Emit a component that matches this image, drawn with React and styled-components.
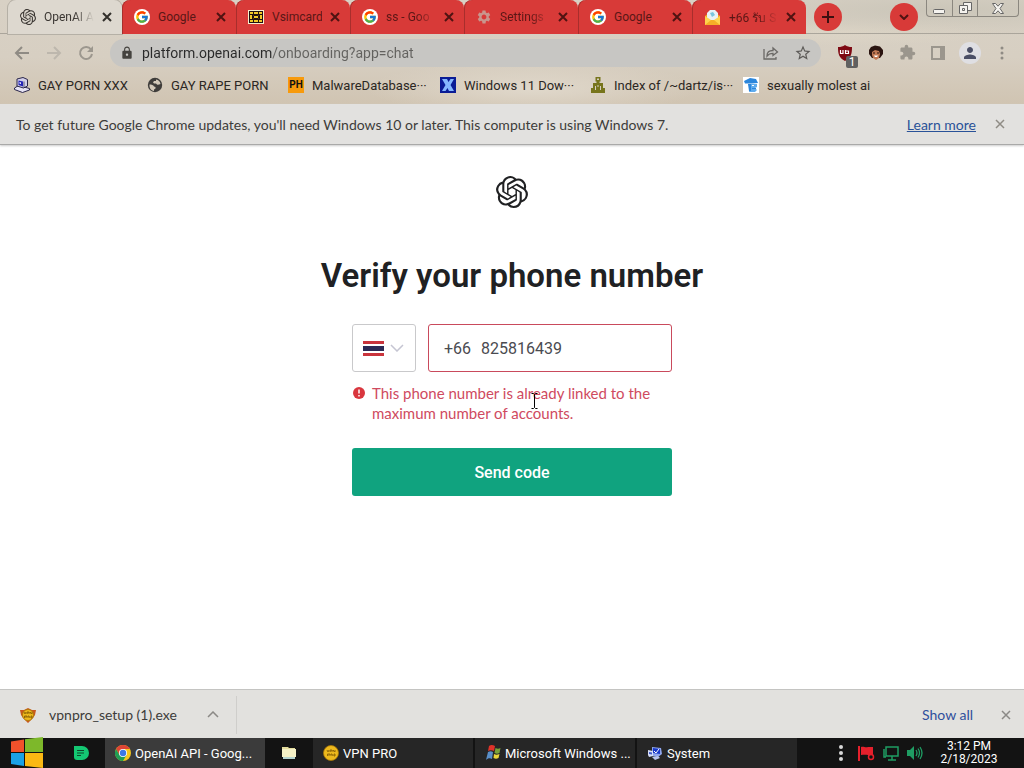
import { useState } from 'react';
import styled, { createGlobalStyle, css } from 'styled-components';
import { SiOpenai } from 'react-icons/si';
import { FcGoogle } from 'react-icons/fc';
import { MdSettings, MdLock, MdExtension, MdPerson, MdPublic, MdStarBorder } from 'react-icons/md';

const GlobalStyle = createGlobalStyle`
  * {
    box-sizing: border-box;
  }
  body {
    margin: 0;
    background: #fff;
    font-family: Roboto, 'Noto Sans', 'Liberation Sans', sans-serif;
    font-size: 13px;
    color: #2b2723;
  }
  button,
  input,
  select {
    font: inherit;
    color: inherit;
  }
  button {
    border: 0;
    padding: 0;
    background: none;
    cursor: pointer;
  }
  svg {
    display: block;
    flex: none;
  }
`;

const Screen = styled.div`
  display: flex;
  flex-direction: column;
  min-height: 100vh;
`;

const BrowserTop = styled.header`
  background:
    radial-gradient(ellipse at 52% 85%, #e0d8cb 0, transparent 22%),
    radial-gradient(ellipse at 92% 10%, #cbc6b9 0, transparent 20%),
    radial-gradient(ellipse at 82% 30%, #ddd5c6 0, transparent 14%),
    linear-gradient(180deg, #d8d1c5 0, #d7cfc2 55%, #d0c4b2 100%);
`;

const TabStrip = styled.div`
  display: flex;
  height: 34px;
  padding: 0 5px 0 8px;
  border-bottom: 1px solid #aaa59b;
`;

const Tab = styled.div`
  display: flex;
  align-items: center;
  gap: 8px;
  flex: 0 1 114px;
  min-width: 0;
  height: 34px;
  padding: 0 10px 0 12px;
  background: #d83a38;
  color: #5a1716;
  font-size: 12px;
  border-radius: 8px 8px 0 0;

  & + & {
    box-shadow: inset 1px 0 0 #a82e2c;
  }
  ${({ $active }) =>
    $active &&
    css`
      background: #ddd8cf;
      color: #3a3632;
      box-shadow: 0 0 0 1px #b5b0a6;
    `}
`;

const TabTitle = styled.span`
  flex: 1;
  min-width: 0;
  overflow: hidden;
  white-space: nowrap;
  ${({ $fade }) =>
    $fade &&
    css`
      mask-image: linear-gradient(90deg, #000 60%, transparent 100%);
    `}
`;

const RoundButton = styled.button`
  display: flex;
  align-items: center;
  justify-content: center;
  width: 28px;
  height: 28px;
  margin: 3px 8px 0;
  border-radius: 50%;
  background: #d83a38;
`;

const Spacer = styled.div`
  flex: 1;
`;

const WindowButtons = styled.div`
  display: flex;
  height: 17px;
  border: 1px solid #8b877f;
  border-top: 0;
  border-radius: 0 0 4px 4px;
`;

const WindowButton = styled.button`
  display: flex;
  align-items: center;
  justify-content: center;
  width: ${({ $wide }) => ($wide ? 41 : 25)}px;

  & + & {
    border-left: 1px solid #8b877f;
  }
`;

const Toolbar = styled.div`
  display: flex;
  align-items: center;
  gap: 16px;
  height: 37px;
  padding: 0 14px;
`;

const Extensions = styled.div`
  display: flex;
  align-items: center;
  gap: 15px;
`;

const IconButton = styled.button`
  display: flex;
  align-items: center;
  justify-content: center;
  position: relative;
  flex: none;
  width: 16px;
  height: 24px;
  color: ${({ $color }) => $color || '#8f8b84'};
`;

const AddressBar = styled.div`
  display: flex;
  align-items: center;
  gap: 16px;
  flex: 1;
  min-width: 0;
  height: 28px;
  padding: 0 10px;
  border-radius: 14px;
  background: #c7c6c3;
  color: #5d5b58;
`;

const AddressInput = styled.input`
  flex: 1;
  min-width: 0;
  height: 24px;
  padding: 0;
  margin-left: -8px;
  border: 0;
  outline: 0;
  font-size: 14px;
  color: transparent;
  background: linear-gradient(90deg, #2a2a2a 130px, #63625f 130px);
  background-clip: text;
`;

const Badge = styled.span`
  position: absolute;
  right: -5px;
  bottom: -3px;
  width: 12px;
  height: 12px;
  border-radius: 2px;
  background: #606060;
  color: #fff;
  font-size: 12px;
  line-height: 12px;
`;

const Avatar = styled.button`
  display: flex;
  align-items: center;
  justify-content: center;
  width: 22px;
  height: 22px;
  margin: 0 -2px;
  border-radius: 50%;
  background: #dfdfe3;
  color: #4b4f66;
`;

const Bookmarks = styled.nav`
  display: flex;
  height: 33px;
  padding-left: 14px;
`;

const Bookmark = styled.a`
  display: flex;
  align-items: center;
  gap: 8px;
  flex: 0 1 ${({ $width }) => $width}px;
  height: 28px;
  color: inherit;
  text-decoration: none;
  white-space: nowrap;
`;

const InfoBar = styled.div`
  display: flex;
  align-items: center;
  gap: 16px;
  height: 41px;
  padding: 0 16px;
  background: #e2e1df;
  color: #3d3c3a;
  font-family: Lato, sans-serif;
  font-size: 14px;
  border-bottom: 1px solid #a9a9a8;
  box-shadow: 0 1px 2px #ccc;

  a {
    color: #2a5298;
  }
`;

const Page = styled.main`
  display: flex;
  flex-direction: column;
  align-items: center;
  flex: 1;
  padding: 31px 16px;
  color: #202123;

  h1 {
    margin: 48px 0 28px;
    font-size: 33px;
    line-height: 40px;
    font-weight: 600;
    text-align: center;
  }
`;

const PhoneForm = styled.form`
  position: relative;
  width: 100%;
  max-width: 320px;
`;

const Fields = styled.div`
  display: flex;
  gap: 12px;
`;

const CountryBox = styled.div`
  position: relative;
  display: flex;
  align-items: center;
  gap: 6px;
  flex: none;
  width: 64px;
  height: 48px;
  padding: 0 10px;
  border: 1px solid #c9c9cb;
  border-radius: 3px;

  select {
    position: absolute;
    inset: 0;
    opacity: 0;
  }
`;

const PhoneBox = styled.label`
  display: flex;
  align-items: center;
  gap: 10px;
  flex: 1;
  min-width: 0;
  height: 48px;
  padding: 0 15px;
  border: 1px solid #c94a5c;
  border-radius: 3px;
  font-size: 16px;
  color: #4a4b50;

  input {
    flex: 1;
    min-width: 0;
    padding: 0;
    border: 0;
    outline: 0;
    background: none;
  }
`;

const ErrorText = styled.div`
  display: flex;
  gap: 7px;
  margin-top: 11px;
  font-family: Lato, sans-serif;
  font-size: 15px;
  line-height: 20px;
  color: #cf4a60;

  svg {
    margin: 4px 0 0 1px;
  }
`;

const SubmitButton = styled.button`
  width: 100%;
  height: 48px;
  margin-top: 25px;
  border-radius: 3px;
  background: #10a37f;
  color: #fff;
  font-size: 16px;
  font-weight: 500;
`;

const TextCursor = styled.svg`
  position: absolute;
  left: 179px;
  top: 69px;
`;

const Shelf = styled.div`
  display: flex;
  align-items: center;
  gap: 28px;
  height: 49px;
  padding: 1px 13px 0 20px;
  border-top: 1px solid #c4c4c2;
  background: #e2e1de;
  color: #3d3c3a;
  font-family: Lato, sans-serif;
  font-size: 14px;

  a {
    color: #2f4f9c;
    text-decoration: none;
  }
`;

const Download = styled.div`
  display: flex;
  align-items: center;
  gap: 13px;
  width: 217px;
  height: 38px;
  padding-right: 17px;
  border-right: 1px solid #cfcecb;
`;

const Taskbar = styled.footer`
  display: flex;
  align-items: center;
  height: 30px;
  background: #131313;
  color: #fff;
`;

const StartButton = styled.button`
  display: flex;
  width: 57px;
  padding-left: 10px;
`;

const Pinned = styled.button`
  display: flex;
  align-items: center;
  justify-content: center;
  width: 48px;
  height: 30px;
`;

const TaskButton = styled.button`
  display: flex;
  align-items: center;
  gap: 4px;
  flex: 0 1 160px;
  min-width: 0;
  height: 30px;
  padding: 0 10px;
  white-space: nowrap;
  background: ${({ $active }) => ($active ? '#3b3b3b' : '#262626')};

  & + & {
    margin-left: 2px;
  }
`;

const Tray = styled.div`
  display: flex;
  align-items: center;
  gap: 8px;
  margin-left: auto;
  padding-right: 24px;
`;

const Clock = styled.time`
  width: 62px;
  margin-left: 7px;
  font-size: 12px;
  line-height: 13px;
  text-align: center;
`;

const CloseIcon = ({ size = 10, color = 'currentColor', width = 2 }) => (
  <svg width={size} height={size} viewBox="0 0 10 10" stroke={color} strokeWidth={width}>
    <path d="M1 1l8 8M9 1l-8 8" />
  </svg>
);

const GoogleIcon = () => (
  <svg width="16" height="16" viewBox="0 0 16 16">
    <circle cx="8" cy="8" r="8" fill="#fff" />
    <FcGoogle x="1" y="1" width="14" height="14" size={14} />
  </svg>
);

const SimIcon = () => (
  <svg width="16" height="16" viewBox="0 0 16 16">
    <path fill="#f6efcf" d="M0 1h16v14H0z" />
    <path fill="#211" d="M1 2h14v12H1z" />
    <path fill="#f2c928" d="M2 3h3v2H2zM11 3h3v2h-3zM2 6h2v4H2zM12 6h2v4h-2zM2 11h3v2H2zM11 11h3v2h-3zM6 3h4v2H6zM6 11h4v2H6zM5 6h6v4H5z" />
    <path fill="none" stroke="#211" d="M5.500 6.500h5v3h-5z" />
  </svg>
);

const MailIcon = () => (
  <svg width="17" height="17" viewBox="0 0 17 17">
    <path fill="#f7a51e" d="M1 7l7.500-6L16 7v9H1z" />
    <path fill="#e8f2f5" d="M3 4l3-3h5l3 3v7H3z" />
    <path fill="#79c6dd" d="M6 4l3-1 2 3-3 2z" />
    <path fill="#ffd34e" d="M1 7l7.500 5L16 7v9H1z" />
    <path fill="#f6ae27" d="M1 16l6-5h3l6 5z" />
  </svg>
);

const ComputerIcon = () => (
  <svg width="16" height="16" viewBox="0 0 16 16" stroke="#29254a" strokeLinejoin="round">
    <path fill="#e6e3f4" d="M.500 11l4-2.500 11 3v1.500l-7 2.500-8-3z" />
    <path fill="#d2cfea" d="M3 2l6-1.500 4.500 2v6.500l-4 2L3 9z" />
    <path fill="#2525b5" stroke="none" d="M4.500 3.500L9 4.500v5L4.500 8z" />
    <path fill="#fff" stroke="none" d="M5.500 5l1.500.500v1.500l-1.500-.500z" />
    <path fill="none" strokeWidth="0.700" d="M10 4.500v6.500" />
  </svg>
);

const SystemIcon = () => (
  <svg width="16" height="16" viewBox="0 0 16 16">
    <path fill="#8fa6ee" d="M5 2l9 1 1 6-4 3-6-1z" />
    <path fill="#1737c9" d="M6 3l7 1v5l-7-1z" />
    <path stroke="#fff" fill="none" d="M7 6l2 2 3-4" />
    <path fill="#d6def8" d="M1 5l5 1v5l-4 1-1-2z" />
    <path fill="#4059c8" d="M2 7l3 .500v2L2 9z" />
    <path fill="#b9c5ee" d="M5 12l6-1 2 2-5 2z" />
  </svg>
);

const PhIcon = styled.span`
  flex: none;
  width: 16px;
  height: 16px;
  background: #f79a0c;
  color: #111;
  font-size: 10px;
  font-weight: 700;
  line-height: 16px;
  text-align: center;
`;

const XIcon = () => (
  <svg width="16" height="16" viewBox="0 0 16 16">
    <path fill="#0a1c96" d="M0 0h16v16H0z" />
    <path fill="#84b7ff" d="M2 2h5l1.500 3L10.500 2H14l-3.500 6L14 14H9l-1.500-3-2 3H2l3.500-6z" />
  </svg>
);

const GlobeIcon = () => (
  <svg width="16" height="16" viewBox="0 0 16 16">
    <circle cx="8" cy="8" r="7.200" fill="#3f3d3b" />
    <path fill="#d2c8b9" d="M2.500 7.500c2 0 4 .500 4.500 2l1.500.500v1.500l-1.500 1v1.500c-3-.500-4.800-3-4.500-6.500zM9 2.500c2.500.500 4.200 2 4.500 4.500-1.500.500-2.500 1-3.500.500L9 6.500H7L6 5.500l1-1.500h2z" />
  </svg>
);

const LibraryIcon = () => (
  <svg width="16" height="16" viewBox="0 0 16 16" fill="#77751c">
    <path d="M5.500 0h5v4.500h-1V6H13v5h2v5H1v-5h2V6h3.500V4.500h-1z" />
    <path fill="#d5cdbf" d="M7 1.500h2v1.500H7zM5 9h1v4H5zM10 9h1v4h-1zM7.500 8h1v2h-1z" />
  </svg>
);

const CapIcon = () => (
  <svg width="16" height="16" viewBox="0 0 16 16">
    <path fill="#fff" d="M0 0h16v16H0z" />
    <path fill="#2b86dc" d="M1 4l6-3 6 1 2 4-6 .500H2z" />
    <path fill="#5fabed" d="M5 7h9v3l-2 1 2 2-2 2H6l1-4z" />
    <path fill="#2b86dc" d="M5 7h3v7H6zM9 11h4v1H9z" />
    <path fill="#fff" d="M9 8h2v1H9z" />
  </svg>
);

const CoinIcon = ({ ears }) => (
  <svg width="16" height="16" viewBox="0 0 16 16">
    {ears && <path fill="#c85a1c" d="M0 3l4 0 4-2 4 2 4 0-1 5-2 3-5 5-5-5-2-3z" />}
    <circle cx="8" cy="8" r={ears ? 5.500 : 7.500} fill="#edb91d" stroke="#a97708" strokeWidth="0.800" />
    <path stroke="#8a6206" strokeWidth="0.900" fill="none" d="M4 5l1 2 1-2M7 7V5h2v1H7M10 7V5l2 2V5M4.500 11V9H7v1H4.500M8 11V9h1l1 2M11 9h1v2h-1z" />
  </svg>
);

const ChromeIcon = () => (
  <svg width="16" height="16" viewBox="0 0 16 16">
    <circle cx="8" cy="8" r="8" fill="#f5c61c" />
    <path fill="#dd4435" d="M1.070 4A8 8 0 0 1 14.930 4H8L4.500 10z" />
    <path fill="#1f9d55" d="M1.070 4A8 8 0 0 0 8 16l3.500-6H4.500z" />
    <circle cx="8" cy="8" r="4" fill="#fff" />
    <circle cx="8" cy="8" r="3.200" fill="#3b78e7" />
  </svg>
);

const WindowsLogo = () => (
  <svg width="34" height="32" viewBox="0 0 34 32">
    <path fill="#f0512b" d="M1 4.500l13-2V15H1z" />
    <path fill="#7db82a" d="M15 2.300L33 0v15H15z" />
    <path fill="#1ba1e6" d="M1 16h13v13L1 27z" />
    <path fill="#fbb813" d="M15 16h18v15l-18-2z" />
  </svg>
);

const MsFlagIcon = () => (
  <svg width="16" height="16" viewBox="0 0 16 16">
    <path fill="#df3329" d="M4 1c2-1.500 4-1 6 0L9 6C7 5 5 5 3 6z" />
    <path fill="#7aa33a" d="M10.500 3c2 1 3 1 5 0l-1 5c-2 1-3 1-5 0z" />
    <path fill="#5a8fc8" d="M3 7c2-1 3-1 5 0l-1 7c-2-1-4-1-6 1z" />
    <path fill="#e9d63a" d="M9 9c2 1 3 1 5.500 0l-1 4c-2 1-3 1-5 0z" />
  </svg>
);

const FaceIcon = () => (
  <svg width="16" height="16" viewBox="0 0 16 16">
    <path fill="#2a1410" d="M1 5l2-3 4-1.500 5 1 3 3.500v4l-3 4H4L1 9z" />
    <path fill="#c27a55" d="M4 7l3-2 4 1 1 3-1 4-3 2-3-2-1-3z" />
    <path fill="#fff" d="M6 10.500h4l-1 1.500H7z" />
    <path fill="#2a1410" d="M5 7.500h2v1H5zM9 7.500h2v1H9z" />
  </svg>
);

const ShieldIcon = () => (
  <svg width="16" height="16" viewBox="0 0 16 16">
    <path fill="#7e0912" d="M8 0c2 1.500 4 2 7 2 0 7-1 11-7 14C2 13 1 9 1 2c3 0 5-.500 7-2z" />
    <path fill="none" stroke="#fff" strokeWidth="1.200" d="M3.500 5v3.500h2.500V5M8.500 5v3.500h3V6h-3" />
  </svg>
);

const tabs = [
  { title: 'OpenAI A', icon: <SiOpenai size={16} />, active: true, fade: true },
  { title: 'Google', icon: <GoogleIcon /> },
  { title: 'Vsimcard', icon: <SimIcon /> },
  { title: 'ss - Goo', icon: <GoogleIcon />, fade: true },
  { title: 'Settings', icon: <MdSettings size={16} color="#c9958c" />, fade: true },
  { title: 'Google', icon: <GoogleIcon /> },
  { title: '+66 รับ S', icon: <MailIcon />, fade: true },
];

const bookmarks = [
  { title: 'GAY PORN XXX', width: 133, icon: <ComputerIcon /> },
  { title: 'GAY RAPE PORN', width: 141, icon: <GlobeIcon /> },
  { title: 'MalwareDatabase···', width: 152, icon: <PhIcon>PH</PhIcon> },
  { title: 'Windows 11 Dow···', width: 150, icon: <XIcon /> },
  { title: 'Index of /~dartz/is···', width: 153, icon: <LibraryIcon /> },
  { title: 'sexually molest ai', width: 130, icon: <CapIcon /> },
];

const tasks = [
  { title: 'VPN PRO', icon: <CoinIcon /> },
  { title: 'Microsoft Windows ...', icon: <MsFlagIcon /> },
  { title: 'System', icon: <SystemIcon /> },
];

const App = () => {
  const [url, setUrl] = useState('platform.openai.com/onboarding?app=chat');
  const [phone, setPhone] = useState('825816439');

  return (
    <Screen>
      <GlobalStyle />
      <BrowserTop>
        <TabStrip>
          {tabs.map((tab, i) => (
            <Tab key={i} $active={tab.active}>
              {tab.icon}
              <TabTitle $fade={tab.fade}>{tab.title}</TabTitle>
              <button aria-label="Close tab">
                <CloseIcon color={tab.active ? '#33302c' : '#4f1312'} />
              </button>
            </Tab>
          ))}
          <RoundButton aria-label="New tab">
            <svg width="12" height="12" viewBox="0 0 12 12" stroke="#3d1010" strokeWidth="2">
              <path d="M6 0v12M0 6h12" />
            </svg>
          </RoundButton>
          <Spacer />
          <RoundButton aria-label="Search tabs">
            <svg width="10" height="6" viewBox="0 0 10 6" fill="none" stroke="#4f1312" strokeWidth="2">
              <path d="M1 1l4 4 4-4" />
            </svg>
          </RoundButton>
          <WindowButtons>
            <WindowButton aria-label="Minimize">
              <svg width="13" height="15" viewBox="0 0 13 15">
                <rect x="0.500" y="8.500" width="11" height="4" rx="1" fill="#f5f3ef" stroke="#666" />
              </svg>
            </WindowButton>
            <WindowButton aria-label="Restore">
              <svg width="13" height="14" viewBox="0 0 13 14" fill="#f5f3ef" stroke="#666">
                <path d="M4.500 1.500h8v8h-8z" />
                <path d="M0.500 4.500h8v8h-8z" />
                <path d="M3.500 7.500h2v2h-2z" />
              </svg>
            </WindowButton>
            <WindowButton aria-label="Close" $wide>
              <svg width="12" height="11" viewBox="0 0 12 11" fill="#f5f3ef" stroke="#666">
                <path d="M.500.500h3L6 3.200 8.500.500h3L8 5.500l3.500 5h-3L6 7.800l-2.500 2.700h-3L4 5.500z" />
              </svg>
            </WindowButton>
          </WindowButtons>
        </TabStrip>

        <Toolbar>
          <IconButton aria-label="Back">
            <svg width="16" height="14" viewBox="0 0 16 14" fill="none" stroke="currentColor" strokeWidth="2">
              <path d="M15 7H2M8 1L2 7l6 6" />
            </svg>
          </IconButton>
          <IconButton aria-label="Forward" $color="#bdb7ad">
            <svg width="16" height="14" viewBox="0 0 16 14" fill="none" stroke="currentColor" strokeWidth="2">
              <path d="M1 7h13M8 1l6 6-6 6" />
            </svg>
          </IconButton>
          <IconButton aria-label="Reload" $color="#9c978e">
            <svg width="16" height="16" viewBox="0 0 16 16" fill="none" stroke="currentColor" strokeWidth="2">
              <path d="M13 4.500A6 6 0 1 0 14 9" />
              <path fill="currentColor" stroke="none" d="M15 1v6H9z" />
            </svg>
          </IconButton>
          <AddressBar>
            <MdLock size={14} color="#45433f" />
            <AddressInput aria-label="Address" value={url} onChange={(e) => setUrl(e.target.value)} />
            <IconButton aria-label="Share" $color="#6b6966">
              <svg width="16" height="14" viewBox="0 0 16 14" fill="none" stroke="currentColor" strokeWidth="1.300">
                <path d="M1 3v10h12v-2" />
                <path d="M4 10c0-4 2-5.500 6-5.500V2l4.500 4L10 9.500V7.300C7 7.300 5.500 8 4 10z" />
              </svg>
            </IconButton>
            <IconButton aria-label="Bookmark" $color="#5d5b58">
              <MdStarBorder size={18} />
            </IconButton>
          </AddressBar>
          <Extensions>
            <IconButton aria-label="uBlock">
              <ShieldIcon />
              <Badge>1</Badge>
            </IconButton>
            <IconButton aria-label="Extension">
              <FaceIcon />
            </IconButton>
            <IconButton aria-label="Extensions" $color="#9b968d">
              <MdExtension size={17} />
            </IconButton>
            <IconButton aria-label="Side panel" $color="#9b968d">
              <svg width="14" height="14" viewBox="0 0 14 14" fill="none" stroke="currentColor" strokeWidth="2">
                <path d="M1 1h12v12H1z" />
                <path fill="currentColor" stroke="none" d="M9 1h4v12H9z" />
              </svg>
            </IconButton>
            <Avatar aria-label="Profile">
              <MdPerson size={18} />
            </Avatar>
            <IconButton aria-label="Menu">
              <svg width="4" height="14" viewBox="0 0 4 14" fill="currentColor">
                <circle cx="2" cy="2" r="1.500" />
                <circle cx="2" cy="7" r="1.500" />
                <circle cx="2" cy="12" r="1.500" />
              </svg>
            </IconButton>
          </Extensions>
        </Toolbar>

        <Bookmarks>
          {bookmarks.map(({ title, width, icon }) => (
            <Bookmark key={title} href="#" $width={width}>
              {icon}
              {title}
            </Bookmark>
          ))}
        </Bookmarks>
      </BrowserTop>

      <InfoBar>
        <span>
          To get future Google Chrome updates, you'll need Windows 10 or later. This computer is using Windows 7.
        </span>
        <Spacer />
        <a href="#">Learn more</a>
        <IconButton aria-label="Dismiss">
          <CloseIcon width={1.500} />
        </IconButton>
      </InfoBar>

      <Page>
        <SiOpenai size={32} />
        <h1>Verify your phone number</h1>
        <PhoneForm onSubmit={(e) => e.preventDefault()}>
          <Fields>
            <CountryBox>
              <svg width="21" height="15" viewBox="0 0 21 15">
                <path fill="#c9343c" d="M0 0h21v15H0z" />
                <path fill="#fff" d="M0 3h21v9H0z" />
                <path fill="#2b2a55" d="M0 5h21v5H0z" />
              </svg>
              <svg width="14" height="8" viewBox="0 0 14 8" fill="none" stroke="#c5c5d2">
                <path strokeWidth="1.500" d="M1 1l6 6 6-6" />
              </svg>
              <select aria-label="Country" defaultValue="TH">
                <option value="TH">Thailand</option>
              </select>
            </CountryBox>
            <PhoneBox>
              <span>+66</span>
              <input type="tel" value={phone} onChange={(e) => setPhone(e.target.value)} />
            </PhoneBox>
          </Fields>
          <ErrorText role="alert">
            <svg width="12" height="12" viewBox="0 0 12 12">
              <circle cx="6" cy="6" r="6" fill="#d9363e" />
              <path stroke="#fff" strokeWidth="1.500" d="M6 2.500v4M6 8v1.500" />
            </svg>
            <span>This phone number is already linked to the maximum number of accounts.</span>
          </ErrorText>
          <SubmitButton type="submit">Send code</SubmitButton>
          <TextCursor width="8" height="16" viewBox="0 0 8 16" fill="none" stroke="#000">
            <path d="M.500.500h2l1 1 1-1h2M3.500 1.500v13M.500 15.500h2l1-1 1 1h2" />
          </TextCursor>
        </PhoneForm>
      </Page>

      <Shelf>
        <Download>
          <CoinIcon ears />
          <span>vpnpro_setup (1).exe</span>
          <Spacer />
          <button aria-label="Download options">
            <svg width="12" height="7" viewBox="0 0 12 7" fill="none" stroke="#8b8986" strokeWidth="1.500">
              <path d="M1 6l5-5 5 5" />
            </svg>
          </button>
        </Download>
        <Spacer />
        <a href="#">Show all</a>
        <button aria-label="Close downloads">
          <CloseIcon width={1.500} color="#8b8986" />
        </button>
      </Shelf>

      <Taskbar>
        <StartButton aria-label="Start">
          <WindowsLogo />
        </StartButton>
        <Pinned aria-label="Notes">
          <svg width="16" height="14" viewBox="0 0 16 14">
            <path fill="#14c873" d="M1 0h8a7 7 0 0 1 0 14H4a3 3 0 0 1-3-3z" />
            <path stroke="#0b4a2c" d="M4 4.500h7M4 7h7M4 9.500h4" />
          </svg>
        </Pinned>
        <TaskButton $active>
          <ChromeIcon />
          OpenAI API - Goog...
        </TaskButton>
        <Pinned aria-label="Explorer">
          <svg width="14" height="14" viewBox="0 0 14 14">
            <path fill="#e3dc9c" d="M0 1h6l1 1h6v2H0z" />
            <path fill="#f5f1c6" d="M0 3h14v8H0z" />
            <path fill="#b5d4cf" d="M1 11h12v2H1z" />
          </svg>
        </Pinned>
        {tasks.map((task) => (
          <TaskButton key={task.title}>
            {task.icon}
            {task.title}
          </TaskButton>
        ))}
        <Tray>
          <svg width="14" height="18" viewBox="0 0 14 18" fill="#d8d8d8">
            <circle cx="5" cy="3" r="2" />
            <circle cx="5" cy="9" r="2" />
            <circle cx="5" cy="15" r="2" />
          </svg>
          <svg width="17" height="17" viewBox="0 0 17 17">
            <path fill="#e5202c" d="M0 1h2v15H0zM3 2c3-1 4 1 7 0h5v8c-3 1-6-1-12 0z" />
            <circle cx="13" cy="12" r="2.500" fill="#131313" stroke="#e5202c" strokeWidth="1.500" />
          </svg>
          <svg width="16" height="16" viewBox="0 0 16 16" fill="none" stroke="#1f9d63" strokeWidth="1.500">
            <path d="M3 2h12v9H3zM9 11v4M5 15h8M1 4v8h2" />
          </svg>
          <svg width="16" height="14" viewBox="0 0 16 14">
            <path fill="#1f9d63" d="M0 4h3l4-4v14l-4-4H0z" />
            <path fill="none" stroke="#1f9d63" strokeWidth="1.300" d="M9 4q2 3 0 6M11 2.500q3 4.500 0 9M13 1q4 6 0 12" />
          </svg>
          <Clock>
            3:12 PM
            <br />
            2/18/2023
          </Clock>
        </Tray>
      </Taskbar>
    </Screen>
  );
};

export default App;
